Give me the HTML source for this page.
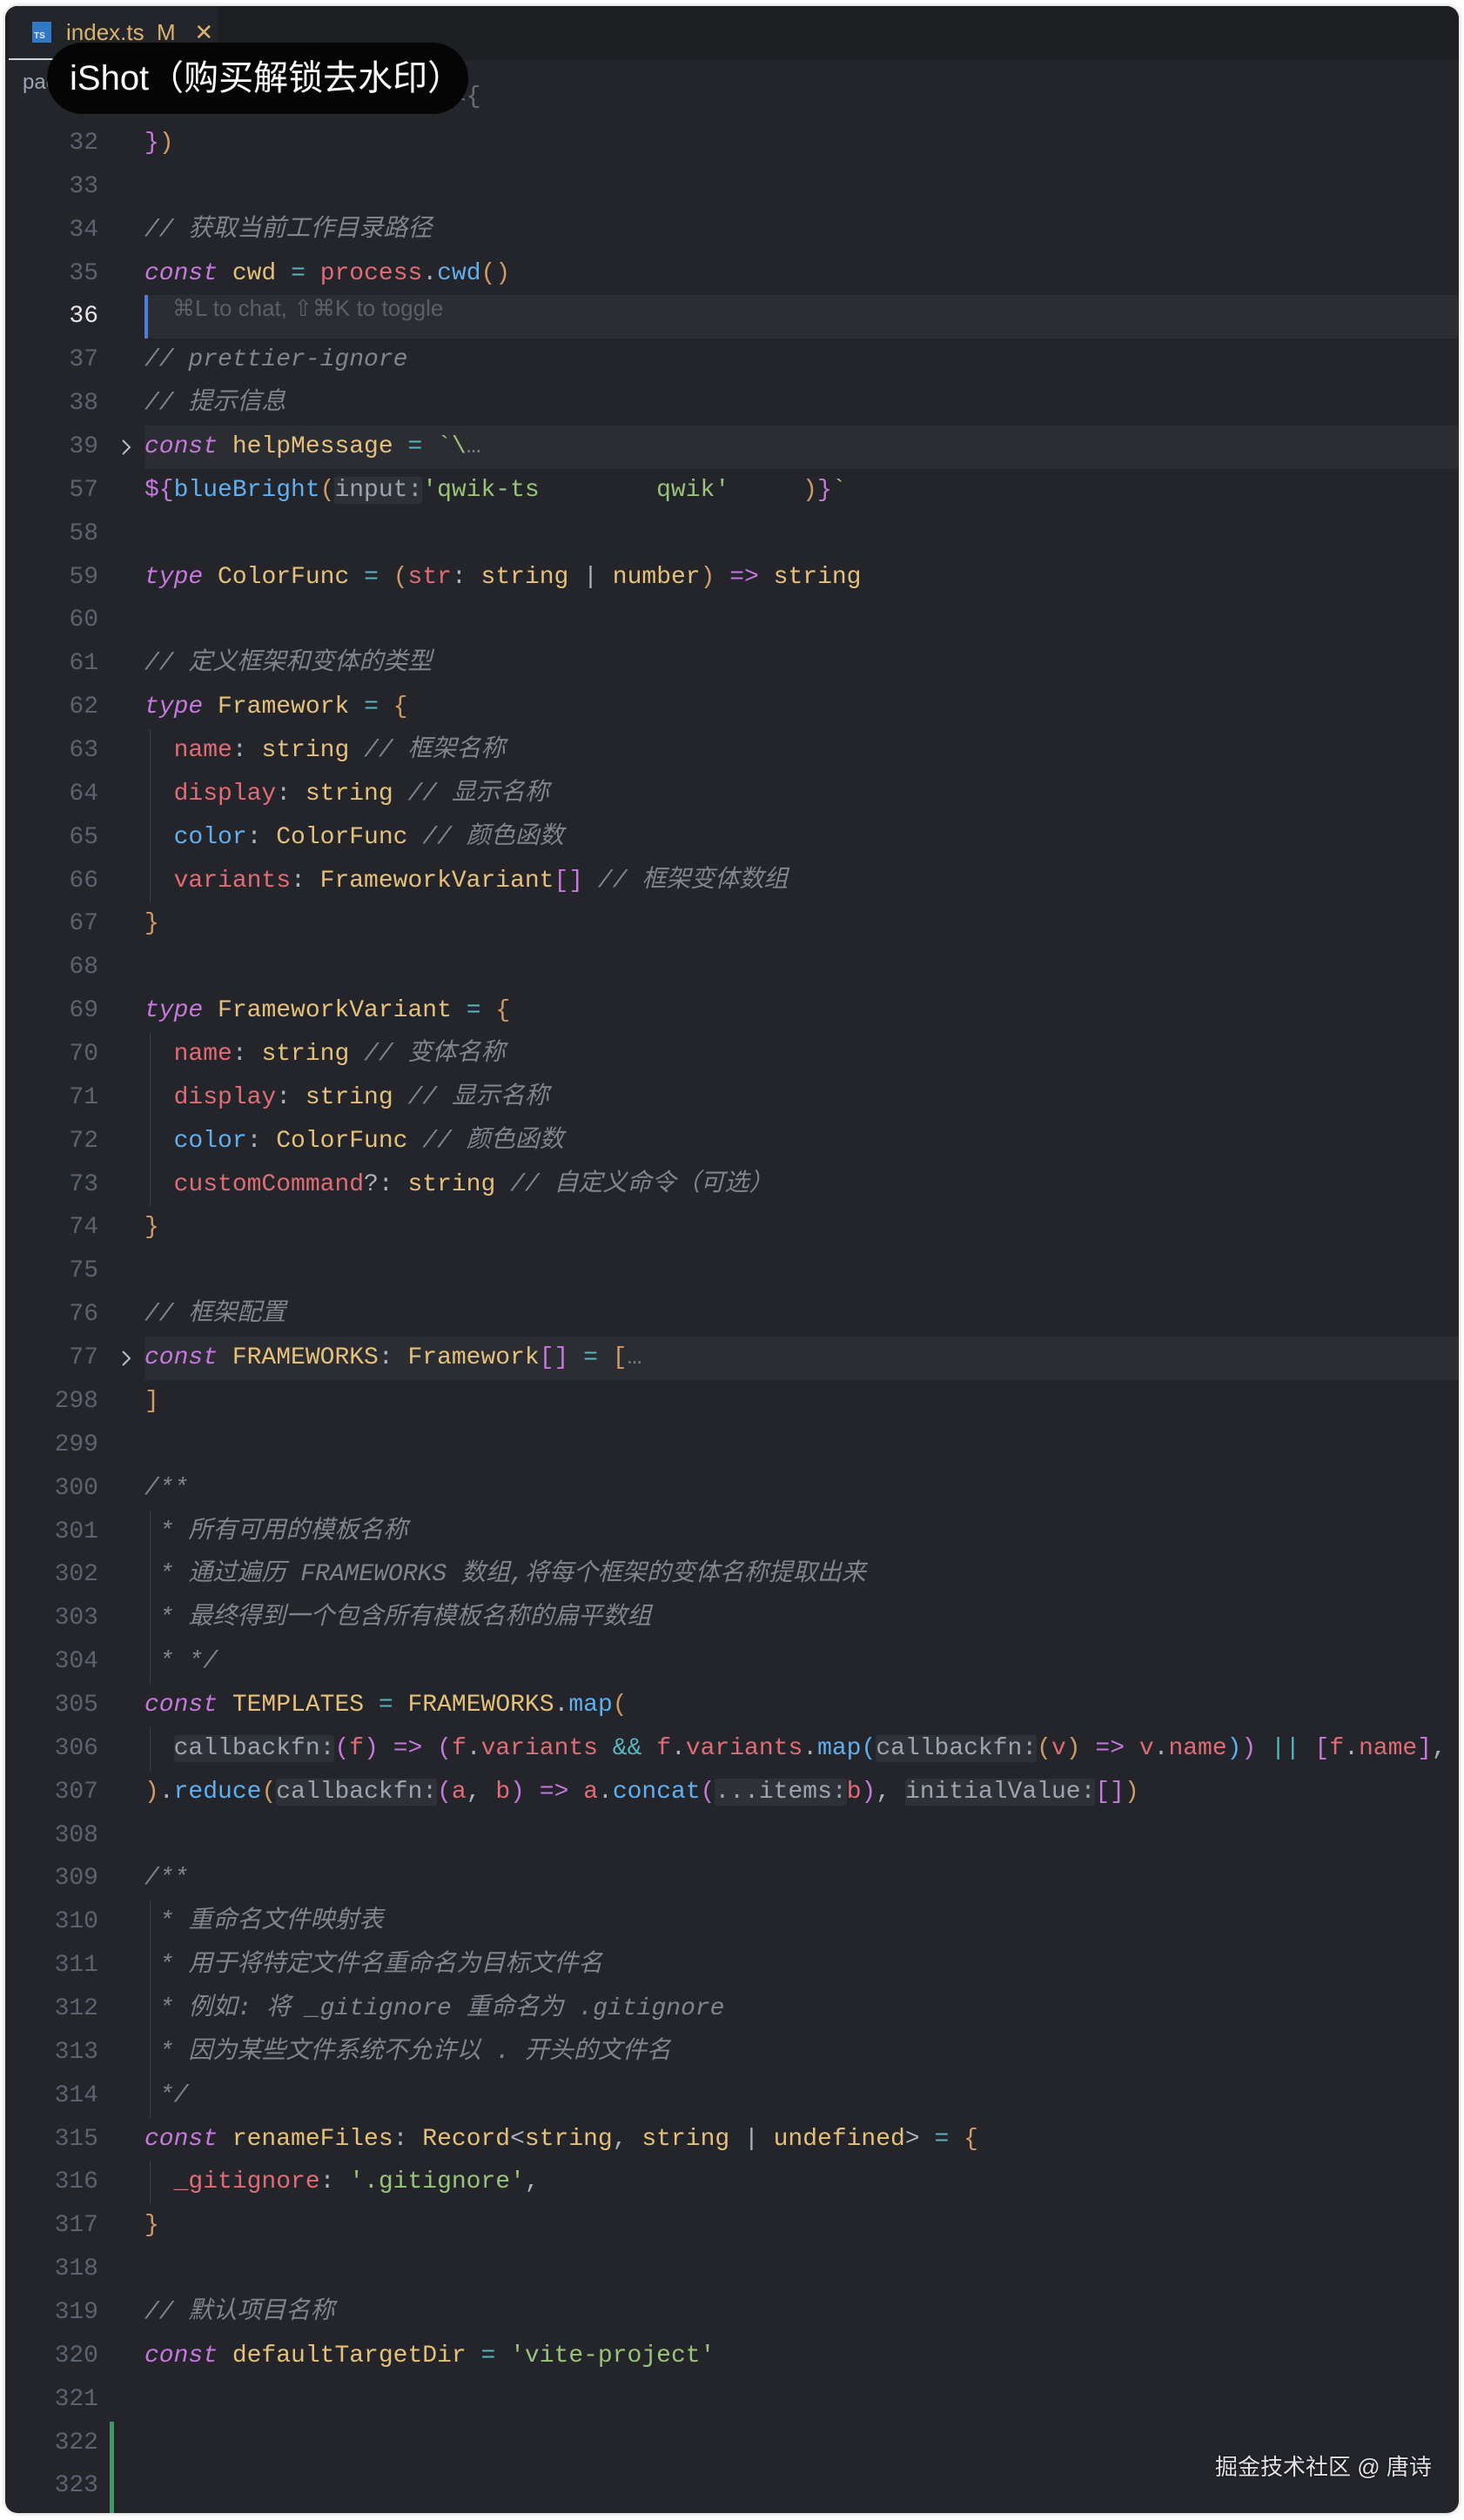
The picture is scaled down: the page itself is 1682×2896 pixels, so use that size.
<!DOCTYPE html>
<html><head><meta charset="utf-8">
<style>
*{margin:0;padding:0;box-sizing:border-box}
html,body{width:1682px;height:2896px;background:#fff;overflow:hidden}
.win{position:absolute;left:6px;top:7px;width:1670px;height:2881px;background:#23252a;border-radius:14px;overflow:hidden;box-shadow:0 0 6px rgba(0,0,0,.25)}
.tabbar{position:absolute;left:0;top:0;width:100%;height:62px;background:#1d1f23}
.tab{position:absolute;left:4px;top:0;width:240px;height:62px;background:#23252a;border-bottom:2px solid #cfd3da}
.tsicon{position:absolute;left:27px;top:18px;width:22px;height:24px;background:#3178c6;color:#dfe8f5;font:bold 10px "Liberation Sans",sans-serif;padding:11px 0 0 2px;line-height:12px}
.tabt{position:absolute;left:66px;top:15px;font:26px "Liberation Sans",sans-serif;color:#d7b46e;white-space:pre}
.crumb{position:absolute;left:20px;top:74px;font:24px "Liberation Sans",sans-serif;color:#9da5b4;white-space:pre}
.mark{position:absolute;left:48px;top:42px;width:484px;height:82px;background:#050505;border-radius:41px;color:#fff;font:40px "Liberation Sans","Noto Sans CJK SC",sans-serif;line-height:82px;padding-left:26px;white-space:pre;z-index:5}
.code{position:absolute;left:0;width:100%}
.ln{position:relative;height:49.87px;font:28px "Liberation Mono","Noto Sans CJK SC",monospace;white-space:pre;color:#abb2bf}
.num,.txt{position:absolute;top:0;height:49.87px;line-height:49.87px}
.num{left:0;width:107px;text-align:right;color:#5c6370;font-family:"Liberation Mono",monospace}
.txt{left:160px}
.hl{position:absolute;left:160px;right:0;top:0;bottom:0;background:#2b2d32}
.fold{position:absolute;left:132px;top:15px}
.guide{position:absolute;left:166px;top:0;bottom:0;width:1px;background:#3b3f46}
.k{color:#c678dd;font-style:italic}
.kk{color:#c678dd}
.t{color:#e5c07b}
.o{color:#56b6c2}
.f{color:#61afef}
.p{color:#e06c75}
.s{color:#98c379}
.c{color:#7f848e;font-style:italic}
.y{color:#d19a66}
.h{background:#2e3137;color:#9ea4ae;border-radius:3px}
.ghost{font:26px "Liberation Sans","DejaVu Sans",sans-serif;color:#5a5f68}
.foot{position:absolute;left:1390px;top:2808px;font:26px "Liberation Sans","Noto Sans CJK SC",sans-serif;color:#e2e2e2;text-shadow:0 0 2px #000}
</style></head><body>
<div class="win">
 <div class="tabbar"><div class="tab"><div class="tsicon">TS</div><div class="tabt">index.ts  M   ✕</div></div></div>
 <div class="crumb">packages › create-qwik › src › index.ts › …</div>
 <div class="ln" style="position:absolute;top:80px;left:0;width:100%;opacity:.5"><span class="txt"><span class="k">const</span> <span class="t">argv</span> <span class="o">=</span> <span class="f">minimist</span>&lt;{</span></div>
 <div class="mark">iShot（购买解锁去水印）</div>
 <div class="code" style="top:133px">
<div class="ln"><span class="num">32</span><span class="txt"><span class="kk">}</span><span class="y">)</span></span></div>
<div class="ln"><span class="num">33</span></div>
<div class="ln"><span class="num">34</span><span class="txt c">// 获取当前工作目录路径</span></div>
<div class="ln"><span class="num">35</span><span class="txt"><span class="k">const</span> <span class="t">cwd</span> <span class="o">=</span> <span class="p">process</span>.<span class="f">cwd</span><span class="y">()</span></span></div>
<div class="ln"><div class="hl" style="border-left:4px solid #4f7bd9"></div><span class="num" style="color:#e6e6e6">36</span><span class="txt ghost" style="left:192px">⌘L to chat, ⇧⌘K to toggle</span></div>
<div class="ln"><span class="num">37</span><span class="txt c">// prettier-ignore</span></div>
<div class="ln"><span class="num">38</span><span class="txt c">// 提示信息</span></div>
<div class="ln"><div class="hl"></div><svg class="fold" width="14" height="20" viewBox="0 0 14 20"><path d="M3 2 L11 10 L3 18" fill="none" stroke="#b8bec8" stroke-width="2"/></svg><span class="num">39</span><span class="txt"><span class="k">const</span> <span class="t">helpMessage</span> <span class="o">=</span> <span class="s">`\</span><span style="color:#777">…</span></span></div>
<div class="ln"><span class="num">57</span><span class="txt"><span class="kk">${</span><span class="f">blueBright</span><span class="y">(</span><span class="h">input:</span><span class="s">'qwik-ts        qwik'</span>     <span class="y">)</span><span class="kk">}</span><span class="s">`</span></span></div>
<div class="ln"><span class="num">58</span></div>
<div class="ln"><span class="num">59</span><span class="txt"><span class="k">type</span> <span class="t">ColorFunc</span> <span class="o">=</span> <span class="y">(</span><span class="p">str</span>: <span class="t">string</span> | <span class="t">number</span><span class="y">)</span> <span class="kk">=&gt;</span> <span class="t">string</span></span></div>
<div class="ln"><span class="num">60</span></div>
<div class="ln"><span class="num">61</span><span class="txt c">// 定义框架和变体的类型</span></div>
<div class="ln"><span class="num">62</span><span class="txt"><span class="k">type</span> <span class="t">Framework</span> <span class="o">=</span> <span class="y">{</span></span></div>
<div class="ln"><span class="guide"></span><span class="num">63</span><span class="txt">  <span class="p">name</span>: <span class="t">string</span> <span class="c">// 框架名称</span></span></div>
<div class="ln"><span class="guide"></span><span class="num">64</span><span class="txt">  <span class="p">display</span>: <span class="t">string</span> <span class="c">// 显示名称</span></span></div>
<div class="ln"><span class="guide"></span><span class="num">65</span><span class="txt">  <span class="f">color</span>: <span class="t">ColorFunc</span> <span class="c">// 颜色函数</span></span></div>
<div class="ln"><span class="guide"></span><span class="num">66</span><span class="txt">  <span class="p">variants</span>: <span class="t">FrameworkVariant</span><span class="kk">[]</span> <span class="c">// 框架变体数组</span></span></div>
<div class="ln"><span class="num">67</span><span class="txt"><span class="y">}</span></span></div>
<div class="ln"><span class="num">68</span></div>
<div class="ln"><span class="num">69</span><span class="txt"><span class="k">type</span> <span class="t">FrameworkVariant</span> <span class="o">=</span> <span class="y">{</span></span></div>
<div class="ln"><span class="guide"></span><span class="num">70</span><span class="txt">  <span class="p">name</span>: <span class="t">string</span> <span class="c">// 变体名称</span></span></div>
<div class="ln"><span class="guide"></span><span class="num">71</span><span class="txt">  <span class="p">display</span>: <span class="t">string</span> <span class="c">// 显示名称</span></span></div>
<div class="ln"><span class="guide"></span><span class="num">72</span><span class="txt">  <span class="f">color</span>: <span class="t">ColorFunc</span> <span class="c">// 颜色函数</span></span></div>
<div class="ln"><span class="guide"></span><span class="num">73</span><span class="txt">  <span class="p">customCommand</span>?: <span class="t">string</span> <span class="c">// 自定义命令（可选）</span></span></div>
<div class="ln"><span class="num">74</span><span class="txt"><span class="y">}</span></span></div>
<div class="ln"><span class="num">75</span></div>
<div class="ln"><span class="num">76</span><span class="txt c">// 框架配置</span></div>
<div class="ln"><div class="hl"></div><svg class="fold" width="14" height="20" viewBox="0 0 14 20"><path d="M3 2 L11 10 L3 18" fill="none" stroke="#b8bec8" stroke-width="2"/></svg><span class="num">77</span><span class="txt"><span class="k">const</span> <span class="t">FRAMEWORKS</span>: <span class="t">Framework</span><span class="kk">[]</span> <span class="o">=</span> <span class="y">[</span><span style="color:#777">…</span></span></div>
<div class="ln"><span class="num">298</span><span class="txt"><span class="y">]</span></span></div>
<div class="ln"><span class="num">299</span></div>
<div class="ln"><span class="num">300</span><span class="txt c">/**</span></div>
<div class="ln"><span class="guide"></span><span class="num">301</span><span class="txt c"> * 所有可用的模板名称</span></div>
<div class="ln"><span class="guide"></span><span class="num">302</span><span class="txt c"> * 通过遍历 FRAMEWORKS 数组,将每个框架的变体名称提取出来</span></div>
<div class="ln"><span class="guide"></span><span class="num">303</span><span class="txt c"> * 最终得到一个包含所有模板名称的扁平数组</span></div>
<div class="ln"><span class="guide"></span><span class="num">304</span><span class="txt c"> * */</span></div>
<div class="ln"><span class="num">305</span><span class="txt"><span class="k">const</span> <span class="t">TEMPLATES</span> <span class="o">=</span> <span class="t">FRAMEWORKS</span>.<span class="f">map</span><span class="y">(</span></span></div>
<div class="ln"><span class="guide"></span><span class="num">306</span><span class="txt">  <span class="h">callbackfn:</span><span class="kk">(</span><span class="p">f</span><span class="kk">)</span> <span class="kk">=&gt;</span> <span class="kk">(</span><span class="p">f</span>.<span class="p">variants</span> <span class="o">&amp;&amp;</span> <span class="p">f</span>.<span class="p">variants</span>.<span class="f">map</span><span class="f">(</span><span class="h">callbackfn:</span><span class="y">(</span><span class="p">v</span><span class="y">)</span> <span class="kk">=&gt;</span> <span class="p">v</span>.<span class="p">name</span><span class="f">)</span><span class="kk">)</span> <span class="o">||</span> <span class="kk">[</span><span class="p">f</span>.<span class="p">name</span><span class="kk">]</span>,</span></div>
<div class="ln"><span class="num">307</span><span class="txt"><span class="y">)</span>.<span class="f">reduce</span><span class="y">(</span><span class="h">callbackfn:</span><span class="kk">(</span><span class="p">a</span>, <span class="p">b</span><span class="kk">)</span> <span class="kk">=&gt;</span> <span class="p">a</span>.<span class="f">concat</span><span class="kk">(</span><span class="h">...items:</span><span class="p">b</span><span class="kk">)</span>, <span class="h">initialValue:</span><span class="kk">[]</span><span class="y">)</span></span></div>
<div class="ln"><span class="num">308</span></div>
<div class="ln"><span class="num">309</span><span class="txt c">/**</span></div>
<div class="ln"><span class="guide"></span><span class="num">310</span><span class="txt c"> * 重命名文件映射表</span></div>
<div class="ln"><span class="guide"></span><span class="num">311</span><span class="txt c"> * 用于将特定文件名重命名为目标文件名</span></div>
<div class="ln"><span class="guide"></span><span class="num">312</span><span class="txt c"> * 例如: 将 _gitignore 重命名为 .gitignore</span></div>
<div class="ln"><span class="guide"></span><span class="num">313</span><span class="txt c"> * 因为某些文件系统不允许以 . 开头的文件名</span></div>
<div class="ln"><span class="guide"></span><span class="num">314</span><span class="txt c"> */</span></div>
<div class="ln"><span class="num">315</span><span class="txt"><span class="k">const</span> <span class="t">renameFiles</span>: <span class="t">Record</span>&lt;<span class="t">string</span>, <span class="t">string</span> | <span class="t">undefined</span>&gt; <span class="o">=</span> <span class="y">{</span></span></div>
<div class="ln"><span class="guide"></span><span class="num">316</span><span class="txt">  <span class="p">_gitignore</span>: <span class="s">'.gitignore'</span>,</span></div>
<div class="ln"><span class="num">317</span><span class="txt"><span class="y">}</span></span></div>
<div class="ln"><span class="num">318</span></div>
<div class="ln"><span class="num">319</span><span class="txt c">// 默认项目名称</span></div>
<div class="ln"><span class="num">320</span><span class="txt"><span class="k">const</span> <span class="t">defaultTargetDir</span> <span class="o">=</span> <span class="s">'vite-project'</span></span></div>
<div class="ln"><span class="num">321</span></div>
<div class="ln"><span class="num">322</span><span style="position:absolute;left:120px;top:0;bottom:0;width:5px;background:#3f9a63"></span></div>
<div class="ln"><span class="num">323</span><span style="position:absolute;left:120px;top:0;height:60px;width:5px;background:#3f9a63"></span></div>
 </div>
 <div class="foot">掘金技术社区 @ 唐诗</div>
</div>
</body></html>
